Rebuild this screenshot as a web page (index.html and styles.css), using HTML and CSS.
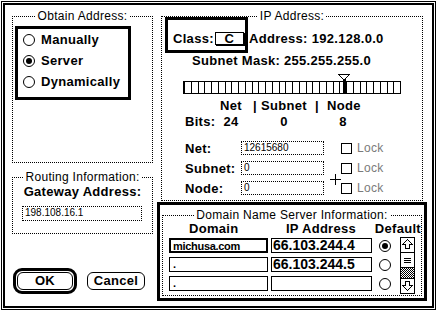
FILE: index.html
```html
<!DOCTYPE html>
<html lang="en">
<head>
    <meta charset="UTF-8">
    <title>MacTCP</title>
    <link rel="stylesheet" href="styles.css">
</head>
<body>
    <div class="frame">
        <div class="win">
            <div class="left">
                <fieldset class="grp obtain">
                    <legend>Obtain Address:</legend>
                    <div class="radiobox">
                        <div class="opt"><span class="radio"></span>Manually</div>
                        <div class="opt"><span class="radio on"></span>Server</div>
                        <div class="opt"><span class="radio"></span>Dynamically</div>
                    </div>
                </fieldset>
                <fieldset class="grp routing">
                    <legend>Routing Information:</legend>
                    <div class="gw">Gateway Address:</div>
                    <div class="field gwfield">198.108.16.1</div>
                </fieldset>
                <div class="buttons">
                    <div class="ok-ring"><div class="btn">OK</div></div>
                    <div class="btn cancel">Cancel</div>
                </div>
            </div>

            <div class="right">
                <fieldset class="grp ip">
                    <legend>IP Address:</legend>
                    <div class="classrow">
                        <div class="classbox">Class:<span class="popup">C</span></div>
                        <div class="addr">Address: 192.128.0.0</div>
                    </div>
                    <div class="mask">Subnet Mask: 255.255.255.0</div>
                    <div class="slider" id="slider">
                        <svg class="knob-top" width="12" height="8" viewBox="0 0 12 8">
                            <polygon points="0.5,0.5 11.5,0.5 6.5,5.5 5.5,5.5" fill="#fff" stroke="#000" shape-rendering="crispEdges"/>
                            <rect x="5" y="5" width="3" height="3" fill="#000"/>
                        </svg>
                        <span class="knob"></span>
                    </div>
                    <div class="bitgrid">
                        <span></span><span class="c">Net</span><span class="c">|</span><span class="c">Subnet</span><span class="c">|</span><span class="c">Node</span>
                        <span>Bits:</span><span class="c">24</span><span></span><span class="c">0</span><span></span><span class="c">8</span>
                    </div>
                    <div class="frow first">
                        <span class="flabel">Net:</span>
                        <div class="field nfield">12615680</div>
                        <span class="check"></span><span class="lock">Lock</span>
                    </div>
                    <div class="frow">
                        <span class="flabel">Subnet:</span>
                        <div class="field nfield">0</div>
                        <span class="check"></span><span class="lock">Lock</span>
                    </div>
                    <div class="frow">
                        <span class="flabel">Node:</span>
                        <div class="field nfield">0</div>
                        <span class="check"></span><span class="lock">Lock</span>
                        <svg class="cursor" width="11" height="11" viewBox="0 0 11 11">
                            <rect x="5" y="0" width="1" height="11" fill="#000"/>
                            <rect x="0" y="5" width="11" height="1" fill="#000"/>
                        </svg>
                    </div>
                </fieldset>

                <div class="dns">
                    <fieldset class="grp dnsgrp">
                        <legend>Domain Name Server Information:</legend>
                        <div class="dnshead">
                            <span class="h-domain">Domain</span>
                            <span class="h-ip">IP Address</span>
                            <span>Default</span>
                        </div>
                        <div class="dnsbody">
                            <div class="rows">
                                <div class="drow">
                                    <div class="dbox dom active">michusa.com</div>
                                    <div class="dbox ipbox">66.103.244.4</div>
                                    <span class="radio on"></span>
                                </div>
                                <div class="drow">
                                    <div class="dbox dom">.</div>
                                    <div class="dbox ipbox">66.103.244.5</div>
                                    <span class="radio"></span>
                                </div>
                                <div class="drow">
                                    <div class="dbox dom">.</div>
                                    <div class="dbox ipbox"></div>
                                    <span class="radio"></span>
                                </div>
                            </div>
                            <div class="sb">
                                <div class="sb-up">
                                    <svg width="13" height="13" viewBox="0 0 13 13"><polygon points="6.5,1.5 11.5,6.5 8.5,6.5 8.5,10.5 4.5,10.5 4.5,6.5 1.5,6.5" fill="#fff" stroke="#000" shape-rendering="crispEdges"/></svg>
                                </div>
                                <div class="sb-thumb"><span></span><span></span><span></span></div>
                                <div class="sb-track"></div>
                                <div class="sb-down">
                                    <svg width="13" height="13" viewBox="0 0 13 13"><polygon points="6.5,11.5 11.5,6.5 8.5,6.5 8.5,2.5 4.5,2.5 4.5,6.5 1.5,6.5" fill="#fff" stroke="#000" shape-rendering="crispEdges"/></svg>
                                </div>
                            </div>
                        </div>
                    </fieldset>
                </div>
            </div>
        </div>
    </div>

    <script>
        // 32 bit cells of the subnet slider
        var oSlider = document.getElementById("slider");
        for (var i = 0; i < 32; i++) {
            var cell = document.createElement("span");
            cell.className = "cell";
            oSlider.appendChild(cell);
        }
    </script>
</body>
</html>
```

FILE: styles.css
```css
html, body{
    margin:0;
    padding:0;
    background:#fff;
}
body{
    width:439px;
    height:311px;
    overflow:hidden;
    color:#000;
    font:bold 13px "Liberation Sans", Arial, sans-serif;
    letter-spacing:.3px;
}
.frame{
    margin:1px 0 0 1px;
    width:435px;
    height:309px;
    border:1px solid #000;
    padding:1px;
    box-sizing:border-box;
}
.win{
    height:100%;
    border:2px solid #000;
    box-sizing:border-box;
    display:flex;
}

/* groups with a dotted frame and a title */
.grp{
    margin:0;
    padding:0;
    border:1px dotted #000;
    box-sizing:border-box;
    min-width:0;
}
.grp legend{
    margin:0 auto;
    padding:0 2px;
    line-height:14px;
    font-size:12px;
    font-weight:normal;
    letter-spacing:.3px;
}

/* left column */
.left{
    width:141px;
    margin-left:7px;
}
.obtain{
    margin-top:4px;
    height:154px;
}
.radiobox{
    margin:3px 0 0 2px;
    width:116px;
    height:74px;
    border:3px solid #000;
    box-sizing:border-box;
    padding-left:5px;
}
.opt{
    display:flex;
    align-items:center;
    gap:6px;
    height:21px;
}
.radio{
    display:inline-block;
    position:relative;
    width:12px;
    height:12px;
    border:1px solid #000;
    border-radius:50%;
    box-sizing:border-box;
    background:#fff;
}
.radio.on::after{
    content:"";
    position:absolute;
    left:2px;
    top:2px;
    width:6px;
    height:6px;
    border-radius:50%;
    background:#000;
}
.routing{
    margin-top:7px;
    height:64px;
}
.gw{
    text-align:center;
    line-height:16px;
}
.field{
    border:1px dotted #000;
    box-sizing:border-box;
    font-size:10px;
    font-weight:normal;
    letter-spacing:0;
    line-height:12px;
    padding-left:2px;
}
.gwfield{
    margin:6px 0 0 9px;
    width:120px;
    height:15px;
}
.buttons{
    display:flex;
    align-items:center;
    gap:10px;
    margin:34px 0 0 1px;
}
.ok-ring{
    width:64px;
    height:26px;
    border:3px solid #000;
    border-radius:9px;
    padding:1px;
    box-sizing:border-box;
}
.btn{
    height:18px;
    border:1px solid #000;
    border-radius:6px;
    box-sizing:border-box;
    text-align:center;
    line-height:16px;
}
.cancel{
    width:58px;
}

/* right column */
.right{
    width:270px;
    margin-left:4px;
}
.ip{
    margin:4px 0 0 4px;
    width:262px;
    height:192px;
}
.classrow{
    display:flex;
    margin-top:-6px;
}
.classbox{
    display:flex;
    align-items:center;
    margin-left:3px;
    width:83px;
    height:36px;
    border:3px solid #000;
    box-sizing:border-box;
    padding:7px 0 0 5px;
}
.popup{
    margin-left:1px;
    width:27px;
    height:11px;
    border:1px solid #000;
    box-shadow:1px 1px 0 #000;
    text-align:center;
    line-height:11px;
}
.addr{
    margin:14px 0 0 1px;
    line-height:16px;
}
.mask{
    padding-left:30px;
    line-height:16px;
}
.slider{
    position:relative;
    display:flex;
    margin:12px 0 0 21px;
    width:218px;
    height:13px;
    border:1px solid #000;
    box-sizing:border-box;
}
.slider .cell{
    flex:1;
    border-left:1px solid #000;
}
.slider .cell:nth-of-type(1){
    border-left:0;
}
.knob{
    position:absolute;
    left:159px;
    top:-1px;
    width:3px;
    height:13px;
    background:#000;
}
.knob-top{
    position:absolute;
    left:154px;
    top:-8px;
}
.bitgrid{
    display:grid;
    grid-template-columns:28px 36px 12px 46px 20px 32px;
    margin:4px 0 0 23px;
    line-height:16px;
    white-space:nowrap;
}
.bitgrid .c{
    text-align:center;
}
.frow{
    position:relative;
    display:flex;
    align-items:center;
    height:20px;
    padding-left:23px;
}
.frow.first{
    margin-top:8px;
}
.flabel{
    width:56px;
}
.nfield{
    width:83px;
    height:14px;
}
.check{
    margin-left:17px;
    width:11px;
    height:11px;
    border:1px solid #000;
    box-sizing:border-box;
}
.lock{
    margin-left:5px;
    font-size:12px;
    font-weight:normal;
    color:#7a7a7a;
}
.cursor{
    position:absolute;
    left:168px;
    top:-4px;
}

/* name servers */
.dns{
    margin-top:1px;
    width:270px;
    height:99px;
    border:3px solid #000;
    box-sizing:border-box;
}
.dnsgrp{
    margin:3px 0 0 2px;
    width:260px;
    height:88px;
}
.dnshead{
    display:flex;
    line-height:14px;
}
.h-domain{
    margin-left:26px;
    width:98px;
}
.h-ip{
    width:90px;
}
.dnsbody{
    display:flex;
    margin-top:1px;
    padding-left:6px;
}
.rows{
    display:flex;
    flex-direction:column;
    gap:4px;
    margin-top:1px;
}
.drow{
    display:flex;
    align-items:center;
}
.dbox{
    height:15px;
    border:1px solid #000;
    box-sizing:border-box;
    line-height:13px;
    padding-left:3px;
    white-space:nowrap;
    overflow:hidden;
}
.dom{
    width:99px;
    font-size:11px;
    letter-spacing:-.3px;
}
.dom.active{
    border-width:2px;
    padding-left:2px;
}
.ipbox{
    margin-left:3px;
    width:101px;
    font-size:14px;
    letter-spacing:0;
    padding-left:1px;
}
.drow .radio{
    margin-left:7px;
}
.sb{
    display:flex;
    flex-direction:column;
    margin-left:9px;
    width:15px;
    height:57px;
    border:1px solid #000;
    box-sizing:border-box;
}
.sb-up, .sb-down{
    height:14px;
}
.sb-up{
    border-bottom:1px solid #000;
}
.sb-down{
    border-top:1px solid #000;
}
.sb svg{
    display:block;
}
.sb-thumb{
    height:14px;
    border-bottom:1px solid #000;
    display:flex;
    flex-direction:column;
    justify-content:center;
    gap:1px;
}
.sb-thumb span{
    margin:0 3px;
    height:1px;
    background:#000;
}
.sb-track{
    flex:1;
    background:repeating-conic-gradient(#000 0 25%, #fff 0 50%) 0 0 / 2px 2px;
}
```
